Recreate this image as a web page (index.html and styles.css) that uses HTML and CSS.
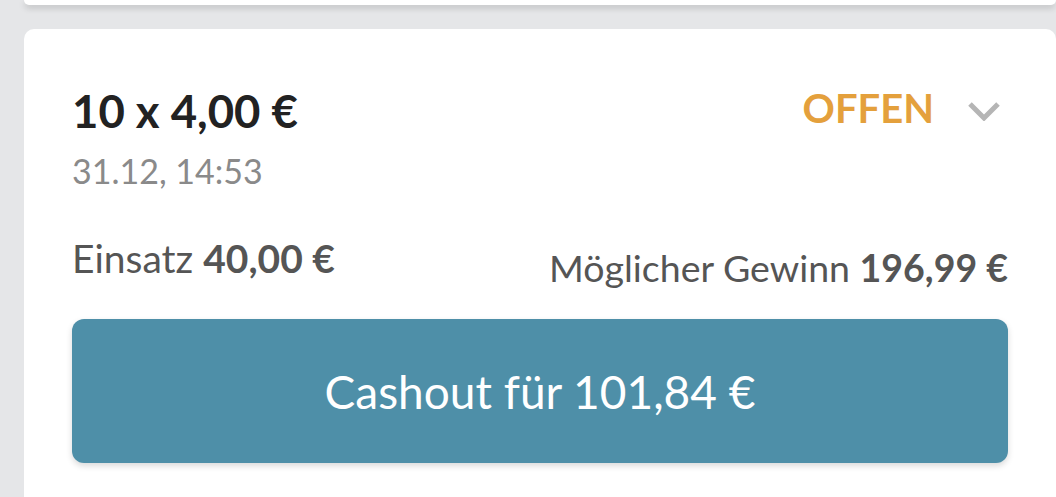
FILE: index.html
```html
<!DOCTYPE html>
<html lang="de">
<head>
    <meta charset="UTF-8">
    <meta name="viewport" content="width=device-width, initial-scale=1.0">
    <link rel="stylesheet" href="styles.css">
    <title>Wetten</title>
</head>
<body>
    <div class="list">
        <div class="card card-prev"></div>
        <div class="card bet">
            <div class="bet-head">
                <div class="bet-info">
                    <div class="bet-title">10 x 4,00 €</div>
                    <div class="bet-date">31.12, 14:53</div>
                </div>
                <div class="bet-status">
                    <span class="status">OFFEN</span>
                    <svg class="chevron" width="34" height="20" viewBox="0 0 34 20">
                        <polyline points="3,3 17,17 31,3" fill="none" stroke="#b5b5b5" stroke-width="5"/>
                    </svg>
                </div>
            </div>
            <div class="bet-sums">
                <div class="stake">Einsatz <b>40,00 €</b></div>
                <div class="win">Möglicher Gewinn <b>196,99 €</b></div>
            </div>
            <button class="cashout">Cashout für 101,84 €</button>
        </div>
    </div>
</body>
</html>
```

FILE: styles.css
```css
* {
    box-sizing: border-box;
}
body {
    margin: 0;
    padding: 0;
    background-color: #e5e6e8;
    font-family: "Lato", "Noto Sans", sans-serif;
    height: 497px;
    overflow: hidden;
}
.list {
    display: flex;
    flex-direction: column;
    gap: 24px;
    padding-left: 24px;
}
.card {
    background-color: #fff;
    border-radius: 10px;
}
.card-prev {
    height: 5px;
    border-radius: 0 0 10px 10px;
    box-shadow: 0 3px 6px rgba(0, 0, 0, 0.18);
}
.bet {
    padding: 55px 48px 40px 48px;
    border-radius: 10px 10px 0 0;
}
.bet-head {
    display: flex;
    justify-content: space-between;
    align-items: flex-start;
}
.bet-title {
    font-size: 45.5px;
    line-height: 53px;
    font-weight: 700;
    color: #222;
}
.bet-date {
    margin-top: 14px;
    font-size: 34px;
    line-height: 40px;
    color: #8a8a8a;
}
.bet-status {
    display: flex;
    align-items: center;
    gap: 33px;
    margin-top: -1px;
    padding-right: 7px;
}
.status {
    font-size: 40px;
    line-height: 50px;
    font-weight: 700;
    color: #e4a03c;
}
.chevron {
    margin-top: 6px;
}
.bet-sums {
    display: flex;
    justify-content: space-between;
    align-items: flex-start;
    margin-top: 43px;
    color: #555;
}
.stake {
    font-size: 39px;
    line-height: 48px;
}
.win {
    margin-top: 12px;
    font-size: 37.5px;
    line-height: 44px;
}
.cashout {
    display: block;
    width: 100%;
    height: 144px;
    margin-top: 29px;
    border: none;
    border-radius: 12px;
    background-color: #4e8fa8;
    color: #fff;
    font-family: inherit;
    font-size: 46px;
    box-shadow: 0 3px 6px rgba(0, 0, 0, 0.15);
}
```
